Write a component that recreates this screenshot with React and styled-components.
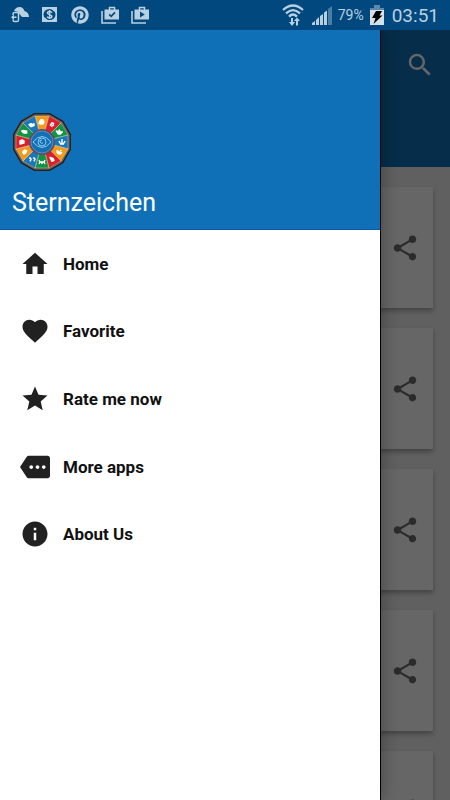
import React from "react";
import styled, { createGlobalStyle } from "styled-components";
import {
  MdHome,
  MdFavorite,
  MdStar,
  MdMore,
  MdInfo,
  MdShare,
  MdSearch,
} from "react-icons/md";
import { FaPinterest } from "react-icons/fa";

const menuItems = [
  { label: "Home", icon: MdHome },
  { label: "Favorite", icon: MdFavorite },
  { label: "Rate me now", icon: MdStar },
  { label: "More apps", icon: MdMore },
  { label: "About Us", icon: MdInfo },
];

const cards = [1, 2, 3, 4, 5];

export default function App() {
  return (
    <Screen>
      <GlobalStyle />
      <StatusBar>
        <StatusGroup $gap={12}>
          <CloudSyncIcon />
          <CoinIcon />
          <FaPinterest size={18} />
          <BagIcon>
            <path d="M8.2 8.4l2 2 3.8-4" fill="none" stroke="#00487d" strokeWidth="1.6" />
          </BagIcon>
          <BagIcon>
            <path d="M9 5.400v6l4.800-3z" fill="#00487d" />
          </BagIcon>
        </StatusGroup>
        <StatusGroup $gap={6}>
          <WifiIcon />
          <SignalIcon />
          <Percent>79%</Percent>
          <BatteryIcon />
          <Clock>03:51</Clock>
        </StatusGroup>
      </StatusBar>

      <Body>
        <AppBar>
          <IconButton aria-label="Search" $color="#fff">
            <MdSearch size={30} />
          </IconButton>
        </AppBar>
        <CardList>
          {cards.map((card) => (
            <Card key={card}>
              <IconButton aria-label="Share" $color="#6c6c6c">
                <MdShare size={30} />
              </IconButton>
            </Card>
          ))}
        </CardList>

        <Scrim />
        <Drawer>
          <DrawerHeader>
            <ZodiacLogo />
            <Title>Sternzeichen</Title>
          </DrawerHeader>
          <Menu>
            {menuItems.map(({ label, icon: Icon }) => (
              <li key={label}>
                <MenuLink href="#">
                  <Icon size={30} color="#212121" />
                  {label}
                </MenuLink>
              </li>
            ))}
          </Menu>
        </Drawer>
      </Body>
    </Screen>
  );
}

function CloudSyncIcon() {
  return (
    <svg width="18" height="18" viewBox="0 0 18 18">
      <path
        d="M3 5C4 2.500 6 1 8.500 1c2.500 0 4 1.500 5 4 2.500.5 4.500 3 4.500 6h-7L8 7.500C7.500 6 6 5 3 5z"
        fill="currentColor"
      />
      <path
        d="M2 9V8q0-1.500 1.500-1.500h2.500Q7.500 6.500 7.500 8v6q0 1.500-1.500 1.500H3.500Q2 15.500 2 14v-.5"
        fill="none"
        stroke="currentColor"
        strokeWidth="1.500"
      />
      <path d="M0 11.200l3-2.700v2h2.500v1.500H3v2z" fill="currentColor" />
    </svg>
  );
}

function CoinIcon() {
  return (
    <svg width="18" height="18" viewBox="0 0 18 18">
      <rect x="1" y="1" width="15" height="15" fill="currentColor" />
      <ellipse cx="8.500" cy="8.500" rx="6" ry="5.600" fill="#00487d" />
      <path
        d="M11 6.600C10 4.900 6.300 5 6.400 7c.1 1.900 4.500 1.300 4.500 3.300 0 2.100-3.800 2.100-4.800.3M8.600 4v9"
        fill="none"
        stroke="currentColor"
        strokeWidth="1.500"
      />
      <path d="M10.500 1.500L14 5M3 12l3.500 3.500" stroke="currentColor" strokeWidth="2" />
    </svg>
  );
}

// shopping bag with a second one behind it, the badge is passed as children
function BagIcon({ children }) {
  return (
    <svg width="18" height="18" viewBox="0 0 18 18">
      <path d="M1 5v12h14" fill="none" stroke="currentColor" strokeWidth="1.600" />
      <path d="M3.500 3.500h15v10h-15z" fill="currentColor" />
      <path d="M8.500 4V1.500h5V4" fill="none" stroke="currentColor" strokeWidth="1.500" />
      {children}
    </svg>
  );
}

function WifiIcon() {
  return (
    <svg width="22" height="24" viewBox="0 0 22 24">
      <g fill="none" stroke="currentColor" strokeWidth="2.300">
        <path d="M1 7Q11-2 21 7" />
        <path d="M4 10.400Q11 3.800 18 10.400" />
        <path d="M7 13.600Q11 9.400 15 13.600" />
      </g>
      <path d="M7 19h2v-4h2v4h2l-3 4zM12 18l3-3.500 3 3.500h-2v4.500h-2V18z" fill="currentColor" />
    </svg>
  );
}

function SignalIcon() {
  return (
    <svg width="22" height="24" viewBox="0 0 22 24">
      <g fill="currentColor">
        <path d="M2 22v-2l3-2v4z" />
        <path d="M6 22v-5l3-3v8z" />
        <path d="M10 22v-9l3-2v11z" />
        <path d="M14 22V9.500l3-2V22z" />
        <path d="M18 22V6l4-3v19z" opacity="0.4" />
      </g>
    </svg>
  );
}

function BatteryIcon() {
  return (
    <svg width="14" height="22" viewBox="0 0 14 22">
      <path d="M4 1h6v3h4v3H0V4h4z" fill="#5a88ad" />
      <path d="M0 6h14v15H0z" fill="#d5e1ea" />
      <path d="M6 7h6l-2.500 4.500h3L3.500 20l2-6H2z" fill="#000" />
    </svg>
  );
}

const wheelColors = ["#f39a1d", "#dd1f2c", "#129447", "#1878be"];

const wheelGlyphs = [
  "M-2-1q1-2 3-1l1 2-1 2h-3l-1-1z",
  "M-2 1l2-3 1 1 1-1M-1 2l3-2",
  "M-3-1l2 1 1-2 1 2 2 0-2 2h-2z",
  "M-3-1q1 3 3 3t3-3M0-3v5M-2 2h4",
  "M-2-2q-1 4 2 4t2-2M1-1l1-1",
  "M-2-2l3 1 1 2-2 1-1-2z",
  "M-3-2l1 2h4l1-2M-2 0l-1 2M2 0l1 2M-1 1h2",
  "M-3-1q2-1 2 1l-1 2M1-1q2-1 2 1l-1 2",
  "M-2 0l2-2 2 1-1 2-2 1z",
  "M-2 2v-3l2-1 2 1v2z",
  "M-3-1q2-1 3 0l2 0 0 2-3 0z",
  "M-3 0l2-1 2 1 1-1 0 2-3 1z",
];

function point(radius, degrees) {
  const angle = ((degrees - 90) * Math.PI) / 180;
  return `${30 + radius * Math.cos(angle)} ${30 + radius * Math.sin(angle)}`;
}

function polygon(radius) {
  return wheelGlyphs.map((_, i) => point(radius, i * 30 + 15)).join(" ");
}

function ZodiacLogo() {
  return (
    <svg width="60" height="60" viewBox="0 0 60 60" role="img" aria-label="Sternzeichen">
      <polygon points={polygon(30)} fill="#241f20" />
      <polygon points={polygon(28)} fill="none" stroke="#b5a79c" strokeWidth="0.600" />
      {wheelGlyphs.map((glyph, i) => {
        const start = i * 30 - 15;
        const [x, y] = point(20, i * 30).split(" ");
        return (
          <g key={i}>
            <path
              d={`M${point(12, start)}L${point(27, start)}L${point(27, start + 30)}L${point(12, start + 30)}z`}
              fill={wheelColors[i % 4]}
              stroke="#e9d9b0"
              strokeWidth="0.500"
            />
            <path
              d={glyph}
              transform={`translate(${x} ${y})`}
              fill={i === 3 || i === 6 || i === 7 ? "none" : "#fff"}
              stroke="#fff"
              strokeWidth="1.400"
              strokeLinejoin="round"
            />
          </g>
        );
      })}
      <circle cx="30" cy="30" r="12" fill="#1270b5" stroke="#5b4b6c" strokeWidth="2" />
      <circle cx="30" cy="30" r="11" fill="none" stroke="#88a8bd" strokeWidth="0.600" />
      <g fill="none" stroke="#8fc8ee" strokeWidth="1">
        <path d="M21 30q9-11 18 0q-9 11-18 0z" />
        <circle cx="30" cy="30" r="4" />
        <path d="M30 28q-3 0-2 2t3 1" />
      </g>
    </svg>
  );
}

const GlobalStyle = createGlobalStyle`
  * {
    box-sizing: border-box;
  }

  body {
    margin: 0;
    font-family: Roboto, "Liberation Sans", sans-serif;
  }
`;

const Screen = styled.div`
  display: flex;
  flex-direction: column;
  height: 100vh;
  overflow: hidden;
`;

const StatusBar = styled.div`
  display: flex;
  justify-content: space-between;
  align-items: center;
  flex-shrink: 0;
  height: 30px;
  padding: 0 11px;
  background-color: #00487d;
  color: #b9d0e1;
`;

const StatusGroup = styled.div`
  display: flex;
  align-items: center;
  gap: ${(props) => props.$gap}px;
`;

const Percent = styled.span`
  font-size: 14px;
`;

const Clock = styled.span`
  margin-left: 2px;
  font-size: 19px;
`;

const Body = styled.div`
  position: relative;
  flex: 1;
  min-height: 0;
  overflow: hidden;
  background-color: #f0f0f0;
`;

const AppBar = styled.header`
  display: flex;
  justify-content: flex-end;
  align-items: flex-start;
  height: 137px;
  padding: 20px 15px;
  background-color: #0f70b7;
`;

const CardList = styled.main`
  display: flex;
  flex-direction: column;
  gap: 20px;
  padding: 20px 17px;
`;

const Card = styled.article`
  display: flex;
  justify-content: flex-end;
  align-items: center;
  height: 121px;
  padding: 0 13px;
  background-color: #fff;
  box-shadow: 0 3px 5px rgba(0, 0, 0, 0.3);
`;

const IconButton = styled.button`
  display: flex;
  padding: 0;
  border: none;
  background: none;
  color: ${(props) => props.$color};
`;

const Scrim = styled.div`
  position: absolute;
  inset: 0;
  background-color: rgba(0, 0, 0, 0.6);
`;

const Drawer = styled.nav`
  position: absolute;
  top: 0;
  bottom: 0;
  left: 0;
  width: calc(100% - 70px);
  max-width: 380px;
  background-color: #fff;
  box-shadow: 1px 0 0 #000, 2px 0 16px rgba(0, 0, 0, 0.3);
`;

const DrawerHeader = styled.div`
  display: flex;
  flex-direction: column;
  justify-content: flex-end;
  align-items: flex-start;
  gap: 16px;
  height: 200px;
  padding: 11px 12px;
  border-bottom: 1px solid #0d5ba6;
  background-color: #0f70b7;
`;

const Title = styled.h1`
  margin: 0;
  font-size: 25px;
  font-weight: 400;
  line-height: 30px;
  color: #fff;
`;

const Menu = styled.ul`
  display: grid;
  grid-auto-rows: 1fr;
  height: 338px;
  margin: 0;
  padding: 0;
  list-style: none;
`;

const MenuLink = styled.a`
  display: flex;
  align-items: center;
  gap: 13px;
  height: 100%;
  padding: 0 20px;
  font-size: 17px;
  font-weight: 700;
  color: #111;
  text-decoration: none;
`;
